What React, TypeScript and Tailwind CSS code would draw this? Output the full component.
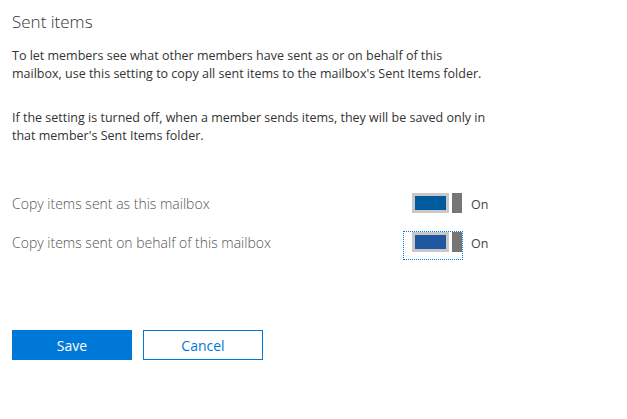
import { useState } from "react";

// toggle row
function Toggle({ on, focused }: { on: boolean; focused?: boolean }) {
  return (
    <div className="flex items-start">
      <div
        className={
          "flex items-start border border-dotted pl-2 pb-[7px] " +
          (focused ? "border-[#0078d7]" : "border-transparent")
        }
      >
        <div className="flex h-5 w-[37px] items-center justify-center bg-[#c8c8c8]">
          <div className={"h-[14px] w-[31px] " + (focused ? "bg-[#1f579f]" : "bg-[#005a9e]")} />
        </div>
        <div className="ml-[3px] h-5 w-[10px] bg-[#767676]" />
      </div>
      <span className="ml-2 mt-[3px] text-[12.5px] leading-5 text-[#444]">{on ? "On" : "Off"}</span>
    </div>
  );
}

export default function App() {
  const [asMailbox] = useState(true);
  const [onBehalf] = useState(true);

  return (
    <div className="h-[419px] w-[627px] bg-white pl-3 pt-[8px] text-[#333]" style={{ fontFamily: '"Open Sans", "Liberation Sans", sans-serif' }}>
      <h1 className="text-[17px] font-light leading-7 text-[#333]">Sent items</h1>

      <div className="mt-[11px] whitespace-nowrap text-[12.5px] leading-[18px] text-[#333]">
        <p>
          To let members see what other members have sent as or on behalf of this
          <br />
          mailbox, use this setting to copy all sent items to the mailbox's Sent Items folder.
        </p>
        <p className="mt-[26px]">
          If the setting is turned off, when a member sends items, they will be saved only in
          <br />
          that member's Sent Items folder.
        </p>
      </div>

      <div className="mt-[47px] flex flex-col gap-[10px]">
        <div className="flex items-start">
          <span className="mt-[2px] w-[391px] text-[14px] font-light leading-5 text-[#555]">
            Copy items sent as this mailbox
          </span>
          <Toggle on={asMailbox} />
        </div>
        <div className="flex items-start">
          <span className="mt-[2px] w-[391px] text-[14px] font-light leading-5 text-[#555]">
            Copy items sent on behalf of this mailbox
          </span>
          <Toggle on={onBehalf} focused />
        </div>
      </div>

      <div className="mt-[70px] flex gap-[11px]">
        <button className="h-[30px] w-[120px] bg-[#0078d7] text-[14px] text-white">Save</button>
        <button className="h-[30px] w-[120px] border border-[#0078d7] bg-white text-[14px] text-[#0078d7]">
          Cancel
        </button>
      </div>
    </div>
  );
}
